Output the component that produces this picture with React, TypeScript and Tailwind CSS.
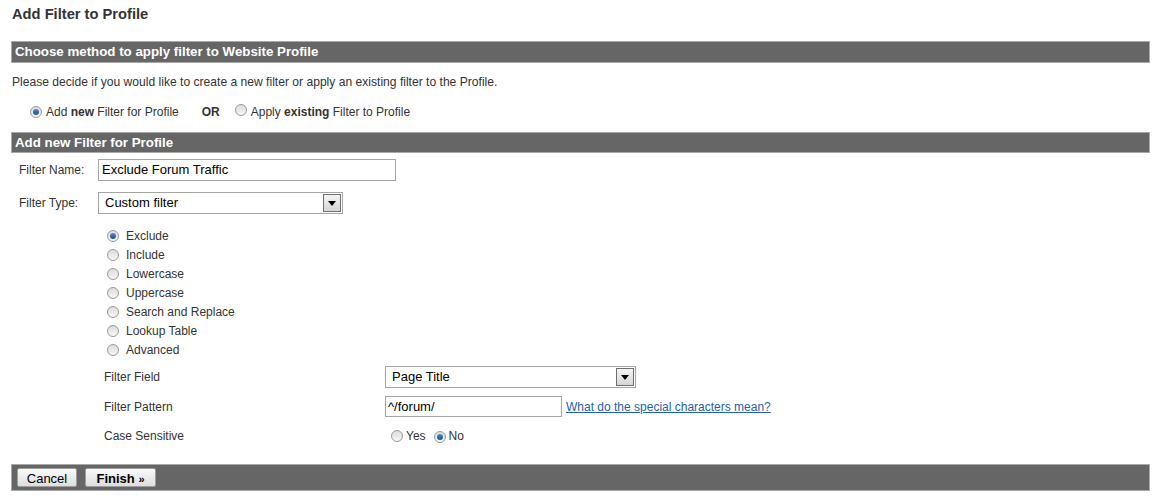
import React from 'react';

// small radio button drawn with css
function Radio({ checked }: { checked?: boolean }) {
  return (
    <span className="inline-flex h-[12px] w-[12px] shrink-0 items-center justify-center rounded-full border border-[#9a9a9a] bg-gradient-to-b from-[#dcdcdc] to-[#f7f7f7]">
      {checked && <span className="h-[6px] w-[6px] rounded-full bg-gradient-to-b from-[#4a8fd0] to-[#1d4f86]" />}
    </span>
  );
}

function SelectBox({ value, width }: { value: string; width: string }) {
  return (
    <div className={`flex h-[22px] items-center justify-between border border-[#a5a5a5] bg-white pl-[6px] pr-[1px] text-[13px] text-black ${width}`}>
      <span>{value}</span>
      <span className="flex h-[18px] w-[18px] items-center justify-center border border-[#6f6f6f] bg-gradient-to-b from-[#f4f4f4] to-[#d6d6d6]">
        <svg width="8" height="5" viewBox="0 0 8 5">
          <path d="M0 0H8L4 5Z" fill="#000" />
        </svg>
      </span>
    </div>
  );
}

const filterTypes = [
  { label: 'Exclude', checked: true },
  { label: 'Include' },
  { label: 'Lowercase' },
  { label: 'Uppercase' },
  { label: 'Search and Replace' },
  { label: 'Lookup Table' },
  { label: 'Advanced' },
];

function SectionBar({ title, height }: { title: string; height: string }) {
  return (
    <div className={`flex items-center border border-[#a9a9a9] bg-[#666666] pl-[3px] text-[13.3px] font-bold text-white ${height}`}>
      {title}
    </div>
  );
}

export default function App() {
  return (
    <div className="h-[504px] w-[1162px] bg-white pl-[11px] pr-[12px] font-['Liberation_Sans',Arial,sans-serif] text-[12px] text-[#333]">
      <h1 className="flex h-[28px] items-center pl-[1px] text-[14.7px] font-bold text-[#333]">Add Filter to Profile</h1>

      <div className="mt-[13px]">
        <SectionBar title="Choose method to apply filter to Website Profile" height="h-[22px]" />
      </div>

      <p className="mt-[11px] flex h-[16px] items-center pl-[1px] text-[12.1px]">
        Please decide if you would like to create a new filter or apply an existing filter to the Profile.
      </p>

      <div className="mt-[14px] flex h-[16px] items-center pl-[19px]">
        <Radio checked />
        <span className="ml-[4px]">
          Add <b>new</b> Filter for Profile
        </span>
        <span className="ml-[23px] font-bold">OR</span>
        <span className="ml-[15px]">
          <Radio />
        </span>
        <span className="ml-[4px]">
          Apply <b>existing</b> Filter to Profile
        </span>
      </div>

      <div className="mt-[12px]">
        <SectionBar title="Add new Filter for Profile" height="h-[21px]" />
      </div>

      <div className="mt-[6px] flex items-center pl-[8px]">
        <span className="w-[79px]">Filter Name:</span>
        <div className="flex h-[22px] w-[298px] items-center border border-[#a5a5a5] bg-white pl-[3px] text-[13px] text-black">
          Exclude Forum Traffic
        </div>
      </div>

      <div className="mt-[11px] flex items-center pl-[8px]">
        <span className="w-[79px]">Filter Type:</span>
        <SelectBox value="Custom filter" width="w-[245px]" />
      </div>

      <ul className="mt-[12px] pl-[96px]">
        {filterTypes.map((t) => (
          <li key={t.label} className="flex h-[19px] items-center">
            <Radio checked={t.checked} />
            <span className="ml-[7px]">{t.label}</span>
          </li>
        ))}
      </ul>

      <div className="mt-[7px] flex items-center pl-[93px]">
        <span className="w-[281px]">Filter Field</span>
        <SelectBox value="Page Title" width="w-[251px]" />
      </div>

      <div className="mt-[8px] flex items-center pl-[93px]">
        <span className="w-[281px]">Filter Pattern</span>
        <div className="flex h-[21px] w-[177px] items-center border border-[#a5a5a5] bg-white pl-[2px] text-[13px] text-black">
          ^/forum/
        </div>
        <a href="#" className="ml-[4px] text-[#1f5fae] underline">
          What do the special characters mean?
        </a>
      </div>

      <div className="mt-[11px] flex h-[16px] items-center pl-[93px]">
        <span className="w-[287px]">Case Sensitive</span>
        <Radio />
        <span className="ml-[3px]">Yes</span>
        <span className="ml-[8px]">
          <Radio checked />
        </span>
        <span className="ml-[3px]">No</span>
      </div>

      <div className="mt-[20px] flex h-[27px] items-center gap-[8px] border border-[#a9a9a9] bg-[#666666] pl-[5px]">
        <button className="h-[19px] w-[60px] rounded-[2px] border border-[#9d9d9d] bg-gradient-to-b from-[#fafafa] to-[#dedede] text-[13px] text-black">
          Cancel
        </button>
        <button className="h-[19px] w-[71px] rounded-[2px] border border-[#9d9d9d] bg-gradient-to-b from-[#fafafa] to-[#dedede] text-[13px] font-bold text-black">
          Finish <span className="text-[11px]">»</span>
        </button>
      </div>
    </div>
  );
}
